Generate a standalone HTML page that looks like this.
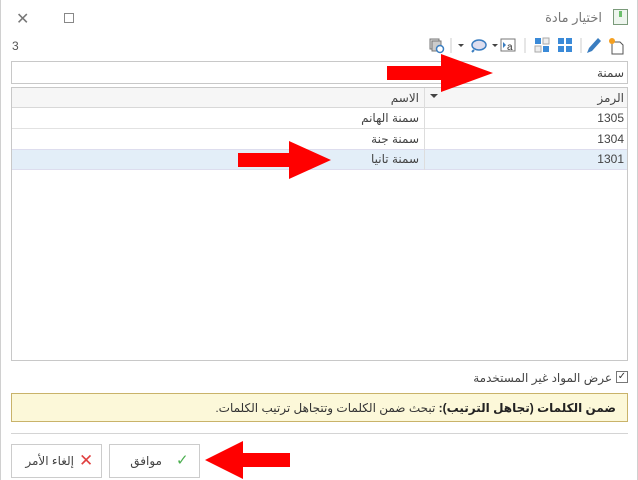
<!DOCTYPE html>
<html><head><meta charset="utf-8"><style>
*{margin:0;padding:0;box-sizing:border-box}
body{width:638px;height:480px;background:#fff;position:relative;overflow:hidden;font-family:"Liberation Sans","DejaVu Sans",sans-serif;font-size:12px;color:#444}
.a{position:absolute}
.t{direction:rtl;white-space:nowrap}
</style></head><body>
<div class="a" style="left:0;top:0;width:638px;height:480px;border-left:1px solid #d0d0d0;border-right:1px solid #d0d0d0"></div>
<!-- title bar -->
<div class="a" style="left:16px;top:9px;font-size:16px;color:#777">✕</div>
<div class="a" style="left:64px;top:13px;width:10px;height:10px;border:1.5px solid #888"></div>
<div class="a t" style="right:36px;top:10px;font-size:13px;color:#777">اختيار مادة</div>
<div class="a" style="left:613px;top:9px;width:15px;height:16px;border:1px solid #7a9a7a;background:#eef5ee"><div class="a" style="left:5px;top:1px;width:3px;height:6px;background:#6cbf6c"></div></div>
<div class="a" style="left:12px;top:39px;font-size:12px;color:#555">3</div>
<!-- toolbar -->
<svg class="a" style="left:428px;top:36px" width="200" height="20">
<rect x="2" y="3" width="9" height="10" fill="#ddd" stroke="#777"/><rect x="4" y="5" width="9" height="10" fill="#ccc" stroke="#777"/>
<circle cx="12" cy="13" r="3.5" fill="#fff" stroke="#3a7dc0" stroke-width="1.5"/>
<line x1="23" y1="2" x2="23" y2="17" stroke="#ccc"/>
<path d="M30 8h6l-3 3z" fill="#444"/>
<ellipse cx="51" cy="9" rx="7" ry="5" fill="#dde" stroke="#3a7dc0" stroke-width="1.5"/><line x1="46" y1="14" x2="44" y2="16" stroke="#3a7dc0" stroke-width="2"/>
<path d="M64 8h6l-3 3z" fill="#444"/>
<rect x="73" y="3" width="14" height="12" fill="#fff" stroke="#777"/><path d="M75 6l3 3-3 3z" fill="#3a7dc0"/><text x="79" y="14" font-size="10" fill="#333" font-family="Liberation Sans">a</text>
<line x1="97" y1="2" x2="97" y2="17" stroke="#ccc"/>
<rect x="107" y="2" width="6" height="6" fill="#3a8ad8"/><rect x="115" y="2" width="6" height="6" fill="#eee" stroke="#aaa"/><rect x="107" y="10" width="6" height="6" fill="#eee" stroke="#aaa"/><rect x="115" y="10" width="6" height="6" fill="#3a8ad8"/>
<rect x="130" y="2" width="6" height="6" fill="#3a8ad8"/><rect x="138" y="2" width="6" height="6" fill="#3a8ad8"/><rect x="130" y="10" width="6" height="6" fill="#3a8ad8"/><rect x="138" y="10" width="6" height="6" fill="#3a8ad8"/>
<line x1="153" y1="2" x2="153" y2="17" stroke="#ccc"/>
<path d="M159 17l2-5 9-10 3 3-9 10z" fill="#3a7dc0"/>
<path d="M184 6h8l3 3v9h-11z" fill="#fff" stroke="#555"/><circle cx="184" cy="5" r="3" fill="#f5a020"/>
</svg>
<!-- search -->
<div class="a" style="left:11px;top:61px;width:617px;height:23px;border:1px solid #c8c8c8"></div>
<div class="a t" style="right:14px;top:66px">سمنة</div>
<!-- grid -->
<div class="a" style="left:11px;top:87px;width:617px;height:274px;border:1px solid #c8c8c8"></div>
<div class="a" style="left:12px;top:88px;width:615px;height:20px;background:#f6f6f6;border-bottom:1px solid #d8d8d8"></div>
<div class="a" style="left:424px;top:88px;width:1px;height:82px;background:#ddd"></div>
<div class="a" style="left:12px;top:128px;width:615px;height:1px;background:#e2e2e2"></div>
<div class="a" style="left:12px;top:149px;width:615px;height:21px;background:#e3eef8;border-top:1px solid #dde;border-bottom:1px solid #dde"></div>
<div class="a" style="left:424px;top:88px;width:1px;height:82px;background:#ddd"></div>
<div class="a" style="left:430px;top:94px;width:0;height:0;border-left:4px solid transparent;border-right:4px solid transparent;border-top:4px solid #444"></div>
<div class="a t" style="right:14px;top:91px">الرمز</div>
<div class="a t" style="right:219px;top:91px">الاسم</div>
<div class="a t" style="right:14px;top:111px">1305</div><div class="a t" style="right:219px;top:111px">سمنة الهانم</div>
<div class="a t" style="right:14px;top:132px">1304</div><div class="a t" style="right:219px;top:132px">سمنة جنة</div>
<div class="a t" style="right:14px;top:152px">1301</div><div class="a t" style="right:219px;top:152px">سمنة تانيا</div>
<!-- checkbox -->
<div class="a" style="left:616px;top:371px;width:12px;height:12px;border:1px solid #777;font-size:10px;line-height:10px;text-align:center;color:#333">✓</div>
<div class="a t" style="right:26px;top:371px">عرض المواد غير المستخدمة</div>
<!-- yellow box -->
<div class="a" style="left:11px;top:393px;width:617px;height:29px;background:#fcf8d9;border:1px solid #c9b36a"></div>
<div class="a t" style="right:22px;top:401px;color:#333"><b style="color:#222">ضمن الكلمات (تجاهل الترتيب):</b> تبحث ضمن الكلمات وتتجاهل ترتيب الكلمات.</div>
<div class="a" style="left:11px;top:433px;width:617px;height:1px;background:#d4d4d4"></div>
<!-- buttons -->
<div class="a" style="left:11px;top:444px;width:91px;height:34px;border:1px solid #ccc;background:#fff"></div>
<div class="a" style="left:79px;top:451px;font-size:17px;color:#e04040">✕</div>
<div class="a t" style="right:564px;top:454px">إلغاء الأمر</div>
<div class="a" style="left:109px;top:444px;width:91px;height:34px;border:1px solid #ccc;background:#fff"></div>
<div class="a" style="left:176px;top:451px;font-size:15px;color:#4caf50">✓</div>
<div class="a t" style="right:476px;top:454px">موافق</div>
<!-- arrows -->
<svg class="a" style="left:0;top:0" width="638" height="480">
<path d="M387 66h54v-12l52 19-52 19v-12h-54z" fill="#f00"/>
<path d="M238 153h51v-12l42 19-42 19v-12h-51z" fill="#f00"/>
<path d="M290 453h-47v-12l-38 19 38 19v-12h47z" fill="#f00"/>
</svg>
</body></html>
